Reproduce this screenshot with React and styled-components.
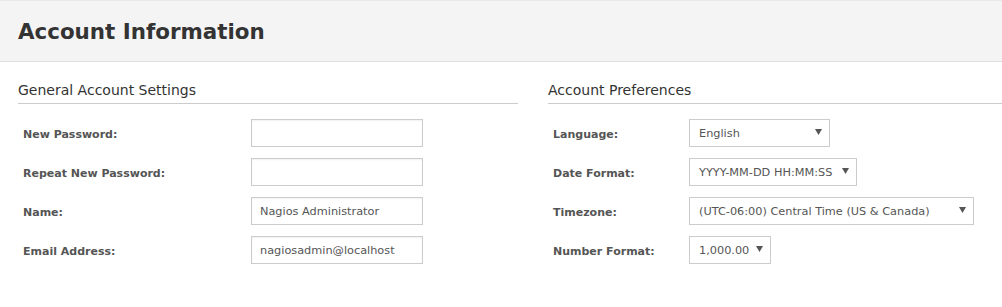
import React from 'react'
import styled, { createGlobalStyle } from 'styled-components'

const GlobalStyle = createGlobalStyle`
  html, body {
    margin: 0;
    padding: 0;
    background: #fff;
    font-family: "DejaVu Sans", Verdana, sans-serif;
    color: #333;
  }
`

const Page = styled.div`
  width: 1002px;
  overflow: hidden;
`

const Header = styled.header`
  height: 60px;
  background: #f4f4f4;
  border-top: 1px solid #e8e8e8;
  border-bottom: 1px solid #dddddd;
  display: flex;
  align-items: center;
  padding: 0 18px;
`

const Title = styled.h1`
  margin: 0;
  font-size: 21.4px;
  font-weight: bold;
  color: #333;
`

const Columns = styled.div`
  display: flex;
  gap: 30px;
  padding: 18px 0 0 18px;
`

const Section = styled.section`
  flex: ${(p) => (p.$grow ? '1 0 auto' : '0 0 500px')};
  width: ${(p) => (p.$grow ? 'auto' : '500px')};
`

const SectionTitle = styled.h2`
  margin: 0;
  font-size: 14px;
  font-weight: normal;
  line-height: 20px;
  color: #333;
  padding-bottom: 3px;
  border-bottom: 1px solid #cccccc;
`

const Form = styled.div`
  display: grid;
  grid-template-columns: ${(p) => p.$labelWidth}px auto;
  justify-content: start;
  row-gap: 11px;
  padding-top: 15px;
`

const Label = styled.label`
  display: flex;
  align-items: center;
  height: 28px;
  padding: 2px 0 0 5px;
  box-sizing: border-box;
  font-size: 11px;
  font-weight: bold;
  color: #555;
`

const TextInput = styled.input`
  box-sizing: border-box;
  width: 172px;
  height: 28px;
  margin: 0;
  padding: 0 8px;
  border: 1px solid #cccccc;
  border-radius: 0;
  box-shadow: inset 0 1px 2px rgba(0, 0, 0, 0.06);
  font-family: "DejaVu Sans", Verdana, sans-serif;
  font-size: 11.3px;
  color: #555;
  outline: none;
`

const Select = styled.div`
  box-sizing: border-box;
  width: ${(p) => p.$width}px;
  height: 28px;
  display: flex;
  align-items: center;
  justify-content: space-between;
  padding: 0 7px 0 9px;
  border: 1px solid #cccccc;
  background: #fff;
  font-size: 11.3px;
  color: #555;
  white-space: nowrap;
`

const Arrow = () => (
  <svg width="7" height="6" viewBox="0 0 7 6" style={{ marginTop: -3 }}>
    <path d="M0 0h7L3.5 6z" fill="#555" />
  </svg>
)

const general = [
  { label: 'New Password:', value: '', type: 'password' },
  { label: 'Repeat New Password:', value: '', type: 'password' },
  { label: 'Name:', value: 'Nagios Administrator', type: 'text' },
  { label: 'Email Address:', value: 'nagiosadmin@localhost', type: 'text' },
]

const prefs = [
  { label: 'Language:', value: 'English', width: 141 },
  { label: 'Date Format:', value: 'YYYY-MM-DD HH:MM:SS', width: 168 },
  { label: 'Timezone:', value: '(UTC-06:00) Central Time (US & Canada)', width: 285 },
  { label: 'Number Format:', value: '1,000.00', width: 82 },
]

const App = () => (
  <Page>
    <GlobalStyle />
    <Header>
      <Title>Account Information</Title>
    </Header>
    <Columns>
      <Section>
        <SectionTitle>General Account Settings</SectionTitle>
        <Form $labelWidth={233}>
          {general.map((f) => (
            <React.Fragment key={f.label}>
              <Label>{f.label}</Label>
              <TextInput type={f.type} defaultValue={f.value} />
            </React.Fragment>
          ))}
        </Form>
      </Section>
      <Section $grow>
        <SectionTitle>Account Preferences</SectionTitle>
        <Form $labelWidth={141}>
          {prefs.map((f) => (
            <React.Fragment key={f.label}>
              <Label>{f.label}</Label>
              <Select $width={f.width}>
                <span>{f.value}</span>
                <Arrow />
              </Select>
            </React.Fragment>
          ))}
        </Form>
      </Section>
    </Columns>
  </Page>
)

export default App
